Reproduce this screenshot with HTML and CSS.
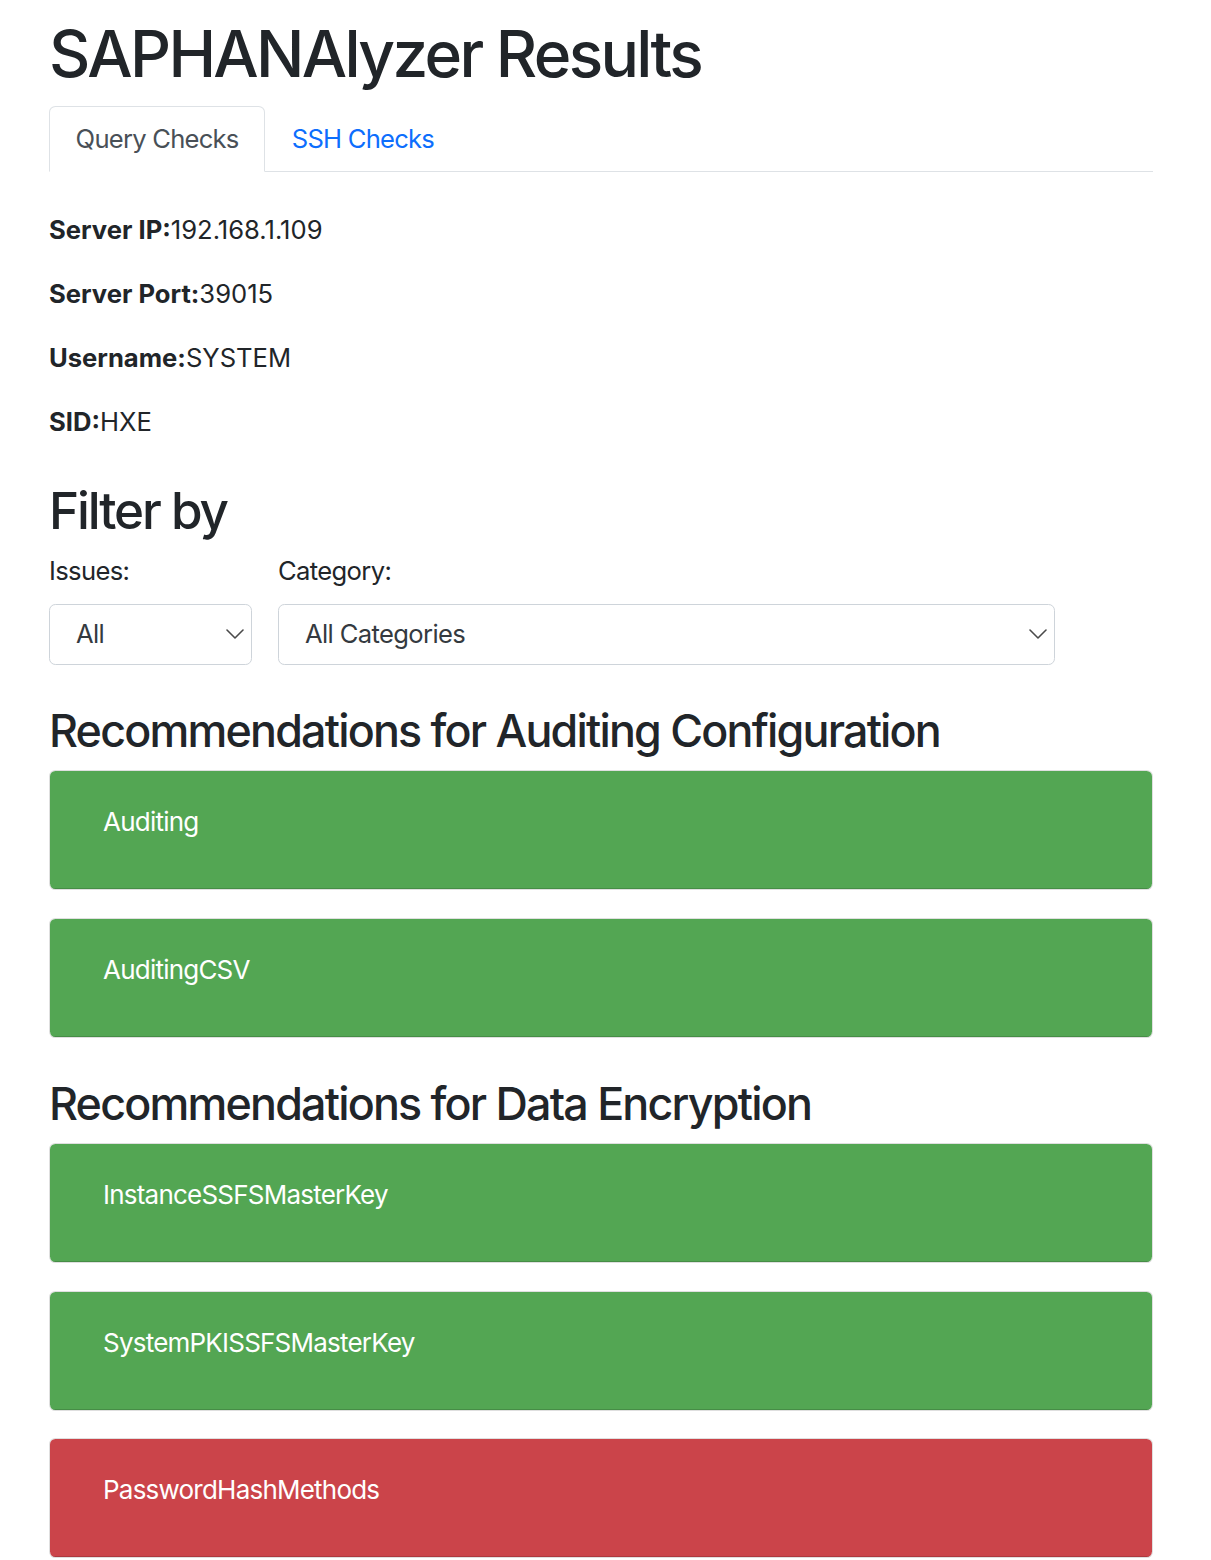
FILE: index.html
```html
<!DOCTYPE html>
<html lang="en">
<head>
<meta charset="utf-8">
<title>SAPHANAlyzer Results</title>
<link rel="stylesheet" href="styles.css">
</head>
<body>
<div class="page">
  <h1 class="title">SAPHANAlyzer Results</h1>
  <ul class="tabs">
    <li class="tab active">Query Checks</li>
    <li class="tab">SSH Checks</li>
  </ul>
  <div class="info">
    <p><strong>Server IP:</strong>192.168.1.109</p>
    <p><strong>Server Port:</strong>39015</p>
    <p><strong>Username:</strong>SYSTEM</p>
    <p><strong>SID:</strong>HXE</p>
  </div>
  <h2 class="filter-title">Filter by</h2>
  <div class="filters">
    <div class="field field-issues">
      <label class="label">Issues:</label>
      <div class="select">
        <span>All</span>
        <svg class="chev" width="18" height="10" viewBox="0 0 18 10"><polyline points="1,1 9,9 17,1" fill="none" stroke="#4a4a4a" stroke-width="1.6" stroke-linecap="round" stroke-linejoin="round"/></svg>
      </div>
    </div>
    <div class="field field-category">
      <label class="label">Category:</label>
      <div class="select">
        <span>All Categories</span>
        <svg class="chev" width="18" height="10" viewBox="0 0 18 10"><polyline points="1,1 9,9 17,1" fill="none" stroke="#4a4a4a" stroke-width="1.6" stroke-linecap="round" stroke-linejoin="round"/></svg>
      </div>
    </div>
  </div>
  <section class="group">
    <h3 class="group-title">Recommendations for Auditing Configuration</h3>
    <div class="card"><div class="card-head ok">Auditing</div></div>
    <div class="card"><div class="card-head ok">AuditingCSV</div></div>
  </section>
  <section class="group">
    <h3 class="group-title">Recommendations for Data Encryption</h3>
    <div class="card"><div class="card-head ok">InstanceSSFSMasterKey</div></div>
    <div class="card"><div class="card-head ok">SystemPKISSFSMasterKey</div></div>
    <div class="card"><div class="card-head bad">PasswordHashMethods</div></div>
  </section>
</div>
</body>
</html>
```

FILE: styles.css
```css
html, body {
  margin: 0;
  padding: 0;
  background: #fff;
}
body {
  font-family: Inter, "Noto Sans", "Liberation Sans", sans-serif;
  font-size: 25.6px;
  line-height: 1.5;
  color: #212529;
  letter-spacing: -0.025em;
}
.page {
  width: 1104px;
  padding: 16px 0 0 49px;
}
.title {
  font-size: 64px;
  font-weight: 500;
  line-height: 1.2;
  margin: 0 0 13px;
  letter-spacing: -0.042em;
}
.tabs {
  display: flex;
  list-style: none;
  margin: 0;
  padding: 0;
  border-bottom: 1px solid #dee2e6;
}
.tab {
  padding: 12.8px 25.6px;
  line-height: 38.4px;
  border: 1px solid transparent;
  border-radius: 6.4px 6.4px 0 0;
  margin-bottom: -1px;
  color: #0d6efd;
  letter-spacing: -0.03em;
}
.tab.active {
  color: #495057;
  background: #fff;
  border-color: #dee2e6 #dee2e6 #fff;
}
.info {
  margin-top: 39px;
  letter-spacing: 0;
}
.info p {
  margin: 0 0 25.6px;
}
.info strong {
  font-weight: 700;
}
.filter-title {
  font-size: 51.2px;
  font-weight: 500;
  line-height: 1.2;
  margin: 38.8px 0 11px;
  letter-spacing: -0.042em;
}
.filters {
  display: flex;
  gap: 26px;
}
.field {
  display: flex;
  flex-direction: column;
}
.field-issues {
  width: 203px;
}
.field-category {
  width: 777px;
}
.label {
  line-height: 38.4px;
  margin-bottom: 12.8px;
}
.select {
  box-sizing: border-box;
  height: 61px;
  border: 1px solid #ced4da;
  border-radius: 6.4px;
  display: flex;
  align-items: center;
  justify-content: space-between;
  padding: 0 7px 0 26px;
  color: #343a40;
}
.chev {
  display: block;
}
.group-title {
  font-size: 44.8px;
  font-weight: 500;
  line-height: 1.2;
  margin: 40px 0 12px;
  letter-spacing: -0.04em;
}
.card {
  border: 1px solid rgba(0, 0, 0, 0.125);
  border-radius: 6.4px;
  overflow: hidden;
  margin-bottom: 27.3px;
  background: #fff;
}
.card-head {
  box-sizing: border-box;
  height: 118px;
  padding: 31px 53px 0;
  font-size: 26px;
  line-height: 40px;
  color: #fff;
  letter-spacing: -0.03em;
  border-bottom: 1px solid rgba(0, 0, 0, 0.15);
}
.card-head.ok {
  background: #53a653;
}
.card-head.bad {
  background: #cb444a;
}
```
